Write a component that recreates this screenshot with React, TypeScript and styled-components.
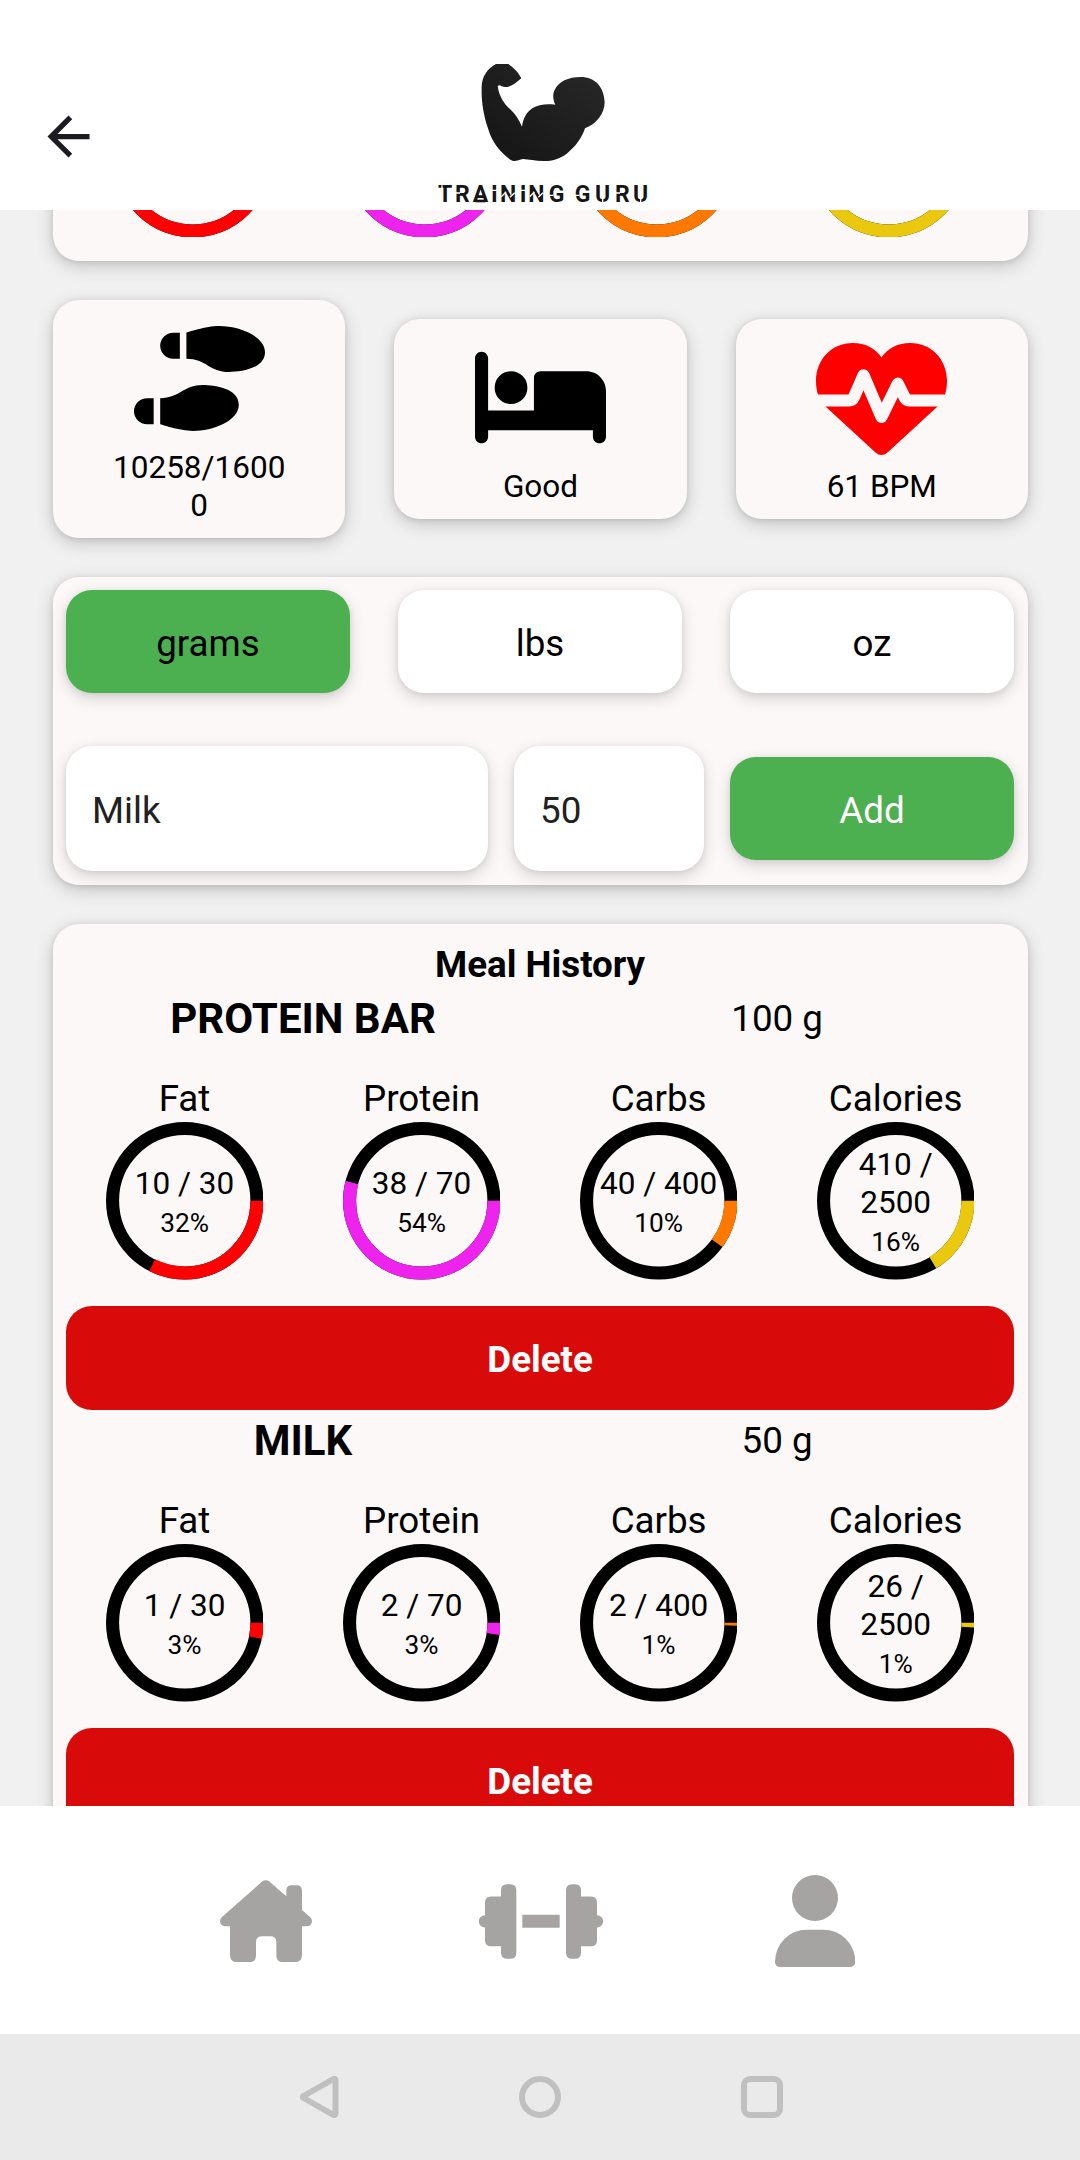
import React from "react";
import styled, { createGlobalStyle } from "styled-components";
import { FaBed, FaShoePrints } from "react-icons/fa6";
import { MdArrowBack } from "react-icons/md";

const GlobalStyle = createGlobalStyle`
  *, *::before, *::after { box-sizing: border-box; }
  body { margin: 0; background: #f1f1f1; }
  button, input { font: inherit; border: 0; margin: 0; outline: 0; }
`;

const Screen = styled.div`
  display: flex;
  flex-direction: column;
  width: 1080px;
  height: 2160px;
  overflow: hidden;
  background: #f1f1f1;
  color: #000;
  font-family: Roboto, "Liberation Sans", sans-serif;
  font-size: 36.75px;
`;

const Header = styled.header`
  flex: none;
  display: grid;
  grid-template-columns: 1fr 230px 1fr;
  align-items: end;
  height: 210px;
  padding: 0 37px;
  background: #fff;
`;

const BackButton = styled.button`
  display: flex;
  align-self: end;
  width: 63px;
  height: 63px;
  padding: 0;
  margin-bottom: 42px;
  background: none;
  color: #1c1b1f;
`;

const Logo = styled.svg`
  display: block;
  width: 230px;
  height: 146px;
`;

const Scroll = styled.main`
  flex: 1;
  min-height: 0;
  overflow: hidden;
  display: flex;
  flex-direction: column;
  gap: 39px;
  padding: 0 52px 0 53px;
`;

const Card = styled.section`
  flex: none;
  border-radius: 26px;
  background: #fcf8f7;
  box-shadow: 0 5px 18px rgba(0, 0, 0, 0.19), 0 1px 6px rgba(0, 0, 0, 0.1);
`;

const TotalsCard = styled(Card)`
  display: grid;
  grid-template-columns: repeat(4, 1fr);
  justify-items: center;
  align-items: end;
  height: 260px;
  margin-top: -209px;
  padding: 0 23.5px 24px;
`;

const StatsRow = styled.div`
  flex: none;
  display: flex;
  justify-content: space-between;
  align-items: center;
`;

const StatCard = styled(Card)`
  display: flex;
  flex-direction: column;
  align-items: center;
  width: 292.4px;
  padding: 13px 52px;
`;

const StatIcon = styled.div<{ $color?: string }>`
  display: flex;
  align-items: center;
  justify-content: center;
  width: 131px;
  height: 131px;
  color: ${(p) => p.$color ?? "#000"};
`;

const StatText = styled.div`
  width: 188px;
  padding-top: 4.5px;
  font-size: 31.5px;
  line-height: 38px;
  text-align: center;
  word-break: break-all;
`;

const FormCard = styled(Card)`
  display: flex;
  flex-direction: column;
  justify-content: space-between;
  height: 308px;
  padding: 13px 14px 13.5px 13px;
`;

const FormRow = styled.div<{ $gap: number }>`
  display: flex;
  align-items: center;
  gap: ${(p) => p.$gap}px;
`;

const raised = `
  border-radius: 26px;
  box-shadow: 0 5px 16px rgba(0, 0, 0, 0.16), 0 1px 5px rgba(0, 0, 0, 0.08);
`;

const Button = styled.button<{ $bg?: string; $fg?: string }>`
  ${raised}
  flex: none;
  width: 284px;
  height: 103px;
  padding: 4px 0 0;
  background: ${(p) => p.$bg ?? "#fff"};
  color: ${(p) => p.$fg ?? "#000"};
`;

const Input = styled.input<{ $width: number }>`
  ${raised}
  flex: none;
  width: ${(p) => p.$width}px;
  height: 125px;
  padding: 4px 26px 0;
  background: #fff;
  color: #212121;
`;

const HistoryCard = styled(Card)`
  padding: 14px 13.8px 13px 13px;
`;

const HistoryTitle = styled.h2`
  margin: 0;
  padding-top: 3px;
  font-size: 36.75px;
  font-weight: 700;
  line-height: 47.7px;
  text-align: center;
`;

const MealHead = styled.div`
  display: grid;
  grid-template-columns: 1fr 1fr;
  height: 56.4px;
  padding-top: 4.6px;
  line-height: 51px;
  text-align: center;
`;

const MealName = styled.div`
  font-size: 42px;
  font-weight: 700;
`;

const Macros = styled.div`
  display: grid;
  grid-template-columns: repeat(4, 1fr);
  justify-items: center;
  margin: 31.6px 0 26.8px;
`;

const MacroLabel = styled.div`
  line-height: 46px;
  text-align: center;
`;

const Macro = styled.div`
  display: flex;
  flex-direction: column;
  align-items: center;
`;

const RingBox = styled.div`
  position: relative;
  display: flex;
  align-items: center;
  justify-content: center;
  width: 157.5px;
  height: 157.5px;
`;

const RingSvg = styled.svg`
  position: absolute;
  inset: 0;
  width: 100%;
  height: 100%;
`;

const RingText = styled.div`
  width: 131px;
  padding-top: 4px;
  text-align: center;
  font-size: 31.5px;
  line-height: 38px;
`;

const RingPercent = styled.div`
  padding-top: 4.2px;
  font-size: 26.25px;
  line-height: 33.2px;
`;

const DeleteButton = styled.button`
  display: block;
  width: 100%;
  height: 103.7px;
  padding: 2px 0 0;
  border-radius: 26px;
  background: #d90a0a;
  color: #fff;
  font-weight: 700;
`;

const TabBar = styled.nav`
  flex: none;
  display: grid;
  grid-template-columns: repeat(3, 274.5px);
  justify-content: center;
  align-items: center;
  justify-items: center;
  height: 228px;
  padding: 2px 0 0 1px;
  background: #fff;
  color: #a5a4a2;
`;

const SystemBar = styled.footer`
  flex: none;
  display: flex;
  justify-content: center;
  align-items: center;
  gap: 179.5px;
  height: 126px;
  background: #eaeaea;
  color: #c0c0c0;
`;

const RADIUS = 72.2;
const LENGTH = 2 * Math.PI * RADIUS;

type RingProps = { color: string; percent: number; value?: string; label?: string };

function Ring({ color, percent, value, label }: RingProps) {
  return (
    <RingBox>
      <RingSvg viewBox="0 0 157.5 157.5" fill="none" strokeWidth="13.1">
        <circle cx="78.75" cy="78.75" r={RADIUS} stroke="#000" />
        <circle
          cx="78.75"
          cy="78.75"
          r={RADIUS}
          stroke={color}
          strokeDasharray={`${(LENGTH * percent) / 100} ${percent >= 100 ? 0 : LENGTH}`}
        />
      </RingSvg>
      {value && (
        <RingText>
          {value}
          <RingPercent>{label}</RingPercent>
        </RingText>
      )}
    </RingBox>
  );
}

const RED = "#fc0202";
const PINK = "#ee24ee";
const ORANGE = "#ff7800";
const YELLOW = "#e9c80e";

const meals = [
  {
    name: "PROTEIN BAR",
    amount: "100 g",
    macros: [
      { name: "Fat", color: RED, percent: 32.4, value: "10 / 30", label: "32%" },
      { name: "Protein", color: PINK, percent: 54, value: "38 / 70", label: "54%" },
      { name: "Carbs", color: ORANGE, percent: 10, value: "40 / 400", label: "10%" },
      { name: "Calories", color: YELLOW, percent: 16.4, value: "410 / 2500", label: "16%" },
    ],
  },
  {
    name: "MILK",
    amount: "50 g",
    macros: [
      { name: "Fat", color: RED, percent: 3.3, value: "1 / 30", label: "3%" },
      { name: "Protein", color: PINK, percent: 2.5, value: "2 / 70", label: "3%" },
      { name: "Carbs", color: ORANGE, percent: 0.6, value: "2 / 400", label: "1%" },
      { name: "Calories", color: YELLOW, percent: 1, value: "26 / 2500", label: "1%" },
    ],
  },
];

function HeartPulse() {
  return (
    <svg width="131" height="117" viewBox="0 -4 131 117">
      <path
        fill="currentColor"
        d="M65.5 14.4C59 5 49 0 37 0 15 0 0 17 0 38c0 11 3 19 9.5 25.5l50 46q6 5 12 0l50-46C128 57 131 49 131 38 131 17 116 0 94 0 82 0 72 5 65.5 14.4Z"
      />
      <path
        fill="none"
        stroke="#fcf8f7"
        strokeWidth="12"
        strokeLinejoin="round"
        d="M-4 57.4H33Q36.500 57.4 38 54L47.5 32.2 65.4 74 81.8 40.6 89 55Q90.500 57.4 94 57.4H135"
      />
    </svg>
  );
}

function HomeIcon() {
  return (
    <svg width="92" height="82.3" viewBox="120 119 276 247" fill="currentColor">
      <path d="M247 123Q257 116 267 123L319 168V151Q319 135 335 135H350Q366 135 366 151V209L391 231Q396 236 396 243Q395 257 382 258H366V345Q365 365 345 366H309Q290 365 289 346V304Q288 289 273 288H244Q229 289 228 304V346Q227 365 208 366H170Q151 365 150 345V258H134Q121 257 120 243Q120 236 125 231Z" />
    </svg>
  );
}

function DumbbellIcon() {
  return (
    <svg width="124" height="75" viewBox="897 131 372 224" fill="currentColor">
      <path d="M963 168V149Q963 131 981 131H991Q1009 131 1009 149V337Q1009 355 991 355H981Q963 355 963 337V317H933Q915 317 915 299V261A18 18 0 0 1 915 224V186Q915 168 933 168Z" />
      <path d="M1027 223H1139V262H1027Z" />
      <path d="M1203 168V149Q1203 131 1185 131H1176Q1158 131 1158 149V337Q1158 355 1176 355H1185Q1203 355 1203 337V317H1233Q1251 317 1251 299V261A18 18 0 0 0 1251 224V186Q1251 168 1233 168Z" />
    </svg>
  );
}

function PersonIcon() {
  return (
    <svg width="80.3" height="92" viewBox="705 105 241 276" fill="currentColor">
      <circle cx="825" cy="174" r="69" />
      <path d="M705 365A96 96 0 0 1 801 269H850A96 96 0 0 1 946 365Q946 380 930 381H720Q705 380 705 365Z" />
    </svg>
  );
}

function BrandLogo() {
  return (
    <Logo viewBox="75 72 690 438">
      <defs>
        <linearGradient id="arm" x1="0" y1="1" x2="1" y2="0">
          <stop offset="0" stopColor="#141414" />
          <stop offset="1" stopColor="#292929" />
        </linearGradient>
      </defs>
      <path
        fill="url(#arm)"
        d="M288 72H325C340 83 354 95 364 115 352 125 340 136 325 140 318 142 310 142 304 138 297 133 292 137 294 144 298 168 312 192 330 207 347 222 357 240 366 260 370 235 378 218 397 205 415 193 440 191 466 194 458 180 458 160 464 150 475 125 505 111 542 111 585 111 612 140 614 187 614 220 590 252 555 265 545 295 525 322 500 341 475 360 450 364 430 363 405 363 385 358 370 357 358 358 350 364 340 363L334 361C300 338 275 305 264 265 250 225 244 180 245 150 243 110 262 86 288 72Z"
      />
      <text
        x="114 165 218 273 300 359 385 446 500 524 585 645 699"
        y="487"
        fill="#151515"
        fontFamily="Roboto, sans-serif"
        fontSize="69"
        fontWeight="700"
      >
        TRAINING GURU
      </text>
      <path
        stroke="#151515"
        strokeWidth="8"
        d="M228 483H256"
      />
      {/* stencil breaks across the wordmark's strokes */}
      <path
        stroke="#fff"
        strokeWidth="4"
        d="M126 436V450M166 459H180M274 451H293M360 451H379M304 470 318 456M330 472 344 458M389 470 403 456M415 472 429 458M446 466H460M524 466H538M608 475V491M646 459H660M722 475V491"
      />
    </Logo>
  );
}

export default function App() {
  return (
    <>
      <GlobalStyle />
      <Screen>
        <Header>
          <BackButton aria-label="Back">
            <MdArrowBack size={63} />
          </BackButton>
          <BrandLogo />
        </Header>

        <Scroll>
          <TotalsCard>
            {[RED, PINK, ORANGE, YELLOW].map((color) => (
              <Ring key={color} color={color} percent={100} />
            ))}
          </TotalsCard>

          <StatsRow>
            <StatCard>
              <StatIcon>
                <FaShoePrints style={{ width: 131, height: 105 }} />
              </StatIcon>
              <StatText>10258/16000</StatText>
            </StatCard>
            <StatCard>
              <StatIcon>
                <FaBed style={{ width: 131, height: 105 }} />
              </StatIcon>
              <StatText>Good</StatText>
            </StatCard>
            <StatCard>
              <StatIcon $color="#ff0000">
                <HeartPulse />
              </StatIcon>
              <StatText>61 BPM</StatText>
            </StatCard>
          </StatsRow>

          <FormCard>
            <FormRow $gap={48}>
              <Button $bg="#4caf50">grams</Button>
              <Button>lbs</Button>
              <Button>oz</Button>
            </FormRow>
            <FormRow $gap={26}>
              <Input $width={422} defaultValue="Milk" />
              <Input $width={190} defaultValue="50" />
              <Button $bg="#4caf50" $fg="#fff">
                Add
              </Button>
            </FormRow>
          </FormCard>

          <HistoryCard>
            <HistoryTitle>Meal History</HistoryTitle>
            {meals.map((meal) => (
              <article key={meal.name}>
                <MealHead>
                  <MealName>{meal.name}</MealName>
                  <div>{meal.amount}</div>
                </MealHead>
                <Macros>
                  {meal.macros.map(({ name, ...ring }) => (
                    <Macro key={name}>
                      <MacroLabel>{name}</MacroLabel>
                      <Ring {...ring} />
                    </Macro>
                  ))}
                </Macros>
                <DeleteButton>Delete</DeleteButton>
              </article>
            ))}
          </HistoryCard>
        </Scroll>

        <TabBar>
          <HomeIcon />
          <DumbbellIcon />
          <PersonIcon />
        </TabBar>

        <SystemBar>
          <svg width="42" height="42" viewBox="0 0 42 42" fill="none" stroke="currentColor" strokeWidth="6" strokeLinejoin="round">
            <path d="M37.5 4V38Q37 39.500 35.500 39L5.500 22Q4 21 5.500 20L35.500 3Q37 2.500 37.500 4Z" />
          </svg>
          <svg width="42" height="42" viewBox="0 0 42 42" fill="none" stroke="currentColor" strokeWidth="6">
            <circle cx="21" cy="21" r="18" />
          </svg>
          <svg width="42" height="42" viewBox="0 0 42 42" fill="none" stroke="currentColor" strokeWidth="6">
            <rect x="3" y="3" width="36" height="36" rx="6" />
          </svg>
        </SystemBar>
      </Screen>
    </>
  );
}
